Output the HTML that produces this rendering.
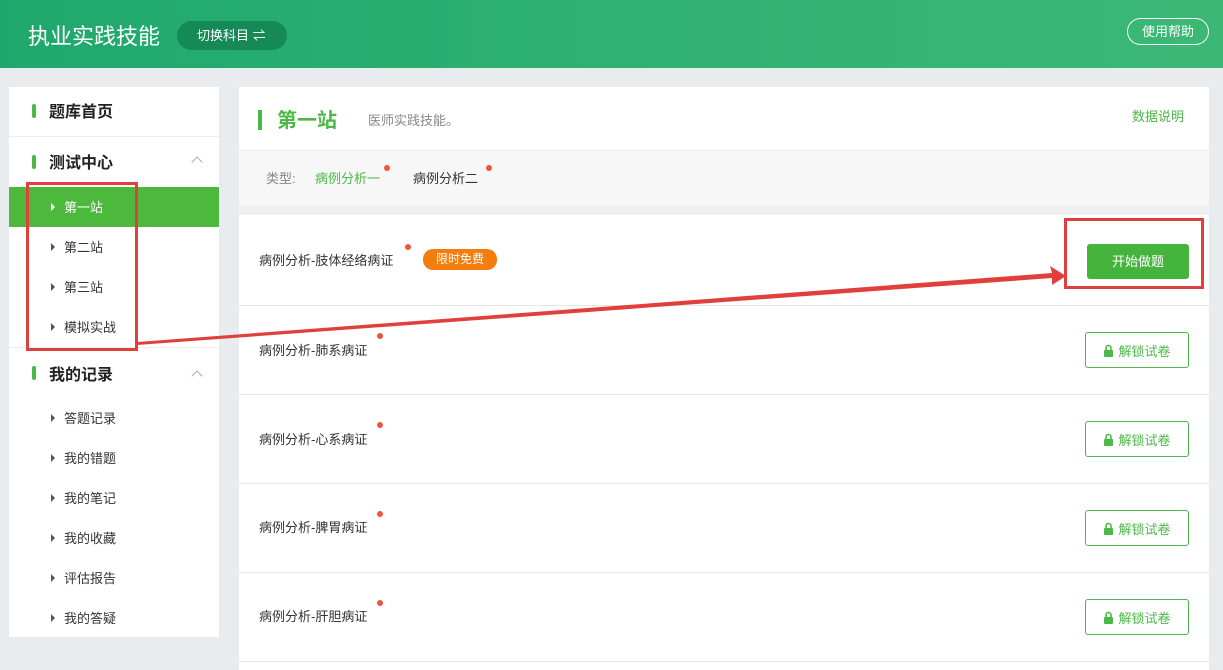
<!DOCTYPE html>
<html><head><meta charset="utf-8"><style>
*{margin:0;padding:0;box-sizing:border-box}
body{width:1223px;height:670px;overflow:hidden;background:#e9ecee;font-family:"Liberation Sans","Noto Sans CJK SC",sans-serif;position:relative;color:#333}
.a{position:absolute}
.hdr{left:0;top:0;width:1223px;height:68px;background:linear-gradient(90deg,#1fa86d,#2fb172 50%,#3bb874)}
.side{left:9px;top:87px;width:210px;height:550px;background:#fff}
.main{left:239px;top:87px;width:970px;height:583px;background:#fff}
.bar{width:4px;height:14px;background:#4cb848;border-radius:2px}
.h{font-size:16px;font-weight:bold;color:#222}
.it{font-size:13px;color:#333}
.tri{width:0;height:0;border-left:4px solid #555;border-top:4px solid transparent;border-bottom:4px solid transparent}
.dot{width:6px;height:6px;border-radius:3px;background:#f0553c}
.row{left:239px;width:970px;height:1px;background:#e6e6e6}
.lk{width:104px;height:36px;border:1px solid #4cb848;border-radius:3px;color:#4cb848;font-size:13px;display:flex;align-items:center;justify-content:center;background:#fff;gap:4px}
.t{font-size:13px;color:#333}
</style></head><body>
<div class="a hdr"></div>
<div class="a" style="left:28px;top:19px;font-size:22px;color:#fff">执业实践技能</div>
<div class="a" style="left:177px;top:21px;width:110px;height:29px;border-radius:15px;background:#168a56;color:#fff;font-size:13px;line-height:29px;padding-left:20px">切换科目 ⇌</div>
<div class="a" style="left:1127px;top:18px;width:82px;height:27px;border:1px solid #fff;border-radius:14px;color:#fff;font-size:13px;line-height:25px;text-align:center">使用帮助</div>

<div class="a side"></div>
<div class="a bar" style="left:32px;top:104px"></div><div class="a h" style="left:49px;top:98px">题库首页</div>
<div class="a" style="left:9px;top:136px;width:210px;height:1px;background:#eee"></div>
<div class="a bar" style="left:32px;top:155px"></div><div class="a h" style="left:49px;top:149px">测试中心</div>
<div class="a" style="left:193px;top:158px;width:8px;height:8px;border-left:1px solid #aaa;border-top:1px solid #aaa;transform:rotate(45deg)"></div>
<div class="a" style="left:9px;top:187px;width:210px;height:40px;background:#4cb83c"></div>
<div class="a tri" style="left:51px;top:203px;border-left-color:#fff"></div><div class="a it" style="left:64px;top:197px;color:#fff">第一站</div>
<div class="a tri" style="left:51px;top:243px"></div><div class="a it" style="left:64px;top:237px">第二站</div>
<div class="a tri" style="left:51px;top:283px"></div><div class="a it" style="left:64px;top:277px">第三站</div>
<div class="a tri" style="left:51px;top:323px"></div><div class="a it" style="left:64px;top:317px">模拟实战</div>
<div class="a" style="left:9px;top:347px;width:210px;height:1px;background:#eee"></div>
<div class="a bar" style="left:32px;top:366px"></div><div class="a h" style="left:49px;top:361px">我的记录</div>
<div class="a" style="left:193px;top:372px;width:8px;height:8px;border-left:1px solid #aaa;border-top:1px solid #aaa;transform:rotate(45deg)"></div>
<div class="a tri" style="left:51px;top:414px"></div><div class="a it" style="left:64px;top:408px">答题记录</div>
<div class="a tri" style="left:51px;top:454px"></div><div class="a it" style="left:64px;top:448px">我的错题</div>
<div class="a tri" style="left:51px;top:494px"></div><div class="a it" style="left:64px;top:488px">我的笔记</div>
<div class="a tri" style="left:51px;top:534px"></div><div class="a it" style="left:64px;top:528px">我的收藏</div>
<div class="a tri" style="left:51px;top:574px"></div><div class="a it" style="left:64px;top:568px">评估报告</div>
<div class="a tri" style="left:51px;top:614px"></div><div class="a it" style="left:64px;top:608px">我的答疑</div>

<div class="a main"></div>
<div class="a" style="left:258px;top:110px;width:4px;height:20px;background:#4cb848"></div>
<div class="a" style="left:277px;top:104px;font-size:20px;font-weight:bold;color:#4cb848">第一站</div>
<div class="a" style="left:368px;top:110px;font-size:13px;color:#888">医师实践技能。</div>
<div class="a" style="left:1132px;top:106px;font-size:13px;color:#4cb848">数据说明</div>
<div class="a" style="left:239px;top:150px;width:970px;height:55px;background:#f7f7f7;border-top:1px solid #eee"></div>
<div class="a" style="left:239px;top:205px;width:970px;height:10px;background:#eef0f1"></div>
<div class="a" style="left:266px;top:168px;font-size:13px;color:#888">类型:</div>
<div class="a" style="left:315px;top:168px;font-size:13px;color:#4cb848">病例分析一</div><div class="a dot" style="left:384px;top:165px"></div>
<div class="a" style="left:413px;top:168px;font-size:13px;color:#333">病例分析二</div><div class="a dot" style="left:486px;top:165px"></div>

<div class="a t" style="left:259px;top:250px">病例分析-肢体经络病证</div><div class="a dot" style="left:405px;top:244px"></div>
<div class="a" style="left:423px;top:249px;width:74px;height:21px;border-radius:10px;background:#f57c0e;color:#fff;font-size:12px;line-height:21px;text-align:center">限时免费</div>
<div class="a" style="left:1087px;top:244px;width:102px;height:35px;border-radius:3px;background:#44b43c;color:#fff;font-size:13px;line-height:35px;text-align:center">开始做题</div>
<div class="a row" style="top:305px"></div>
<div class="a t" style="left:259px;top:340px">病例分析-肺系病证</div><div class="a dot" style="left:377px;top:333px"></div>
<div class="a lk" style="left:1085px;top:332px"><svg width="11" height="13" viewBox="0 0 11 13"><path d="M3 6V4a2.5 2.5 0 0 1 5 0v2" fill="none" stroke="#4cb848" stroke-width="1.6"/><rect x="1" y="6" width="9" height="7" rx="1" fill="#4cb848"/></svg>解锁试卷</div>
<div class="a row" style="top:394px"></div>
<div class="a t" style="left:259px;top:429px">病例分析-心系病证</div><div class="a dot" style="left:377px;top:422px"></div>
<div class="a lk" style="left:1085px;top:421px"><svg width="11" height="13" viewBox="0 0 11 13"><path d="M3 6V4a2.5 2.5 0 0 1 5 0v2" fill="none" stroke="#4cb848" stroke-width="1.6"/><rect x="1" y="6" width="9" height="7" rx="1" fill="#4cb848"/></svg>解锁试卷</div>
<div class="a row" style="top:483px"></div>
<div class="a t" style="left:259px;top:517px">病例分析-脾胃病证</div><div class="a dot" style="left:377px;top:511px"></div>
<div class="a lk" style="left:1085px;top:510px"><svg width="11" height="13" viewBox="0 0 11 13"><path d="M3 6V4a2.5 2.5 0 0 1 5 0v2" fill="none" stroke="#4cb848" stroke-width="1.6"/><rect x="1" y="6" width="9" height="7" rx="1" fill="#4cb848"/></svg>解锁试卷</div>
<div class="a row" style="top:572px"></div>
<div class="a t" style="left:259px;top:606px">病例分析-肝胆病证</div><div class="a dot" style="left:377px;top:600px"></div>
<div class="a lk" style="left:1085px;top:599px"><svg width="11" height="13" viewBox="0 0 11 13"><path d="M3 6V4a2.5 2.5 0 0 1 5 0v2" fill="none" stroke="#4cb848" stroke-width="1.6"/><rect x="1" y="6" width="9" height="7" rx="1" fill="#4cb848"/></svg>解锁试卷</div>
<div class="a row" style="top:661px"></div>

<svg class="a" style="left:0;top:0" width="1223" height="670">
<rect x="27.5" y="183.5" width="109" height="166" fill="none" stroke="#e0403c" stroke-width="3"/>
<rect x="1065.5" y="219.5" width="137" height="68" fill="none" stroke="#e0403c" stroke-width="3"/>
<polygon points="137,342 1052,273 1050,266 1066,276 1052,285 1052,278 137,345" fill="#e0403c"/>
</svg>
</body></html>
